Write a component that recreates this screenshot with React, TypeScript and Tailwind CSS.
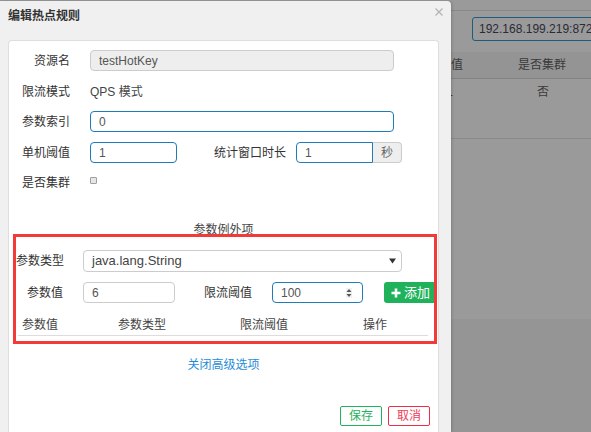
export default function App() {
  return (
    <div className="relative w-[591px] h-[432px] overflow-hidden bg-[#9a9a9a] font-['Liberation_Sans','Noto_Sans_CJK_SC',sans-serif] text-[12px] text-[#333]">
      {/* background page (dimmed) */}
      <div className="h-[11px] border-b border-[#888]" />
      <div className="pl-[472px] pt-[6px] flex">
        <div className="shrink-0 w-[170px] h-[24px] border border-[#1d5b80] rounded-[3px] flex items-center pl-[6px] text-[12px] text-[#2a2a38] whitespace-nowrap">
          192.168.199.219:8720
        </div>
      </div>
      <div className="mt-[11px] h-[27px] bg-[#949494] border-b border-[#828282] flex items-center text-[12px] text-[#3a3a3a] whitespace-nowrap">
        <div className="shrink-0 w-[463px] text-right">单机阈值</div>
        <div className="shrink-0 w-[158px] text-center">是否集群</div>
      </div>
      <div className="h-[60px] border-b border-[#8a8a8a] flex items-start pt-[5px] text-[12px] text-[#3a3a3a] leading-[17px] whitespace-nowrap">
        <div className="shrink-0 w-[453px] text-right">1</div>
        <div className="shrink-0 w-[180px] text-center">否</div>
      </div>
      <div className="h-[180px]" />
      <div className="h-[200px] bg-[#959595]" />

      {/* dialog */}
      <div className="absolute left-0 top-[1px] bottom-0 w-[451px] bg-[#f0f0f0] rounded-tr-[4px] shadow-[1px_0_3px_rgba(0,0,0,0.18)] flex flex-col">
        <div className="relative h-[39px] pt-[7px] px-[8px] leading-[17px] font-bold text-[12px] text-[#333]">
          编辑热点规则
          <svg className="absolute left-[435px] top-[7px]" width="8" height="8" viewBox="0 0 8 8">
            <path d="M0.5 0.5 L7.5 7.5 M7.5 0.5 L0.5 7.5" stroke="#b4b4b4" strokeWidth="1.3" />
          </svg>
        </div>

        <div className="ml-[8px] w-[431px] flex-1 bg-white border border-b-0 border-[#dedede] rounded-t-[4px] flex flex-col pt-[9px]">
          {/* 资源名 */}
          <div className="flex items-center h-[21px]">
            <div className="w-[61px] text-right whitespace-nowrap">资源名</div>
            <div className="ml-[20px] w-[304px] h-[21px] bg-[#eee] border border-[#ccc] rounded-[4px] pl-[8px] flex items-center text-[#555]">
              testHotKey
            </div>
          </div>
          {/* 限流模式 */}
          <div className="mt-[10px] flex items-center h-[21px]">
            <div className="w-[61px] text-right whitespace-nowrap">限流模式</div>
            <div className="ml-[20px] text-[#444]">QPS 模式</div>
          </div>
          {/* 参数索引 */}
          <div className="mt-[9px] flex items-center h-[21px]">
            <div className="w-[61px] text-right whitespace-nowrap">参数索引</div>
            <div className="ml-[20px] w-[304px] h-[21px] border border-[#1e7cb8] rounded-[4px] pl-[8px] flex items-center text-[#555]">
              0
            </div>
          </div>
          {/* 单机阈值 / 统计窗口时长 */}
          <div className="mt-[10px] flex items-center h-[21px]">
            <div className="w-[61px] text-right whitespace-nowrap">单机阈值</div>
            <div className="ml-[20px] w-[87px] h-[21px] border border-[#1e7cb8] rounded-[4px] pl-[8px] flex items-center text-[#555]">
              1
            </div>
            <div className="ml-[37px] whitespace-nowrap">统计窗口时长</div>
            <div className="ml-[10px] flex h-[21px]">
              <div className="w-[77px] h-[21px] border border-[#1e7cb8] rounded-l-[4px] pl-[8px] flex items-center text-[#555]">
                1
              </div>
              <div className="w-[29px] h-[21px] bg-[#eee] border border-l-0 border-[#ccc] rounded-r-[4px] flex items-center justify-center text-[#666]">
                秒
              </div>
            </div>
          </div>
          {/* 是否集群 */}
          <div className="mt-[10px] flex items-start h-[21px]">
            <div className="w-[61px] text-right whitespace-nowrap leading-[21px]">是否集群</div>
            <div className="ml-[20px] mt-[4px] w-[7px] h-[7px] border border-[#a0a0a0] rounded-[1px] bg-[#e6e6e6]" />
          </div>

          <div className="mt-[28px] h-[17px] leading-[17px] text-center text-[#444]">参数例外项</div>

          {/* red annotated box */}
          <div className="relative mt-[-5px] ml-[4px] w-[424px] border-[3px] border-[#f23a3a] pt-[13px] pb-[5px]">
            <div className="flex items-center h-[22px]">
              <div className="w-[47px] text-right whitespace-nowrap">参数类型</div>
              <div className="ml-[20px] w-[319px] h-[22px] border border-[#ccc] rounded-[4px] pl-[8px] pr-[5px] flex items-center text-[#444] text-[13px]">
                java.lang.String
                <svg className="ml-auto" width="7" height="6" viewBox="0 0 7 6">
                  <path d="M0 0.5 L7 0.5 L3.5 5.5 Z" fill="#333" />
                </svg>
              </div>
            </div>
            <div className="mt-[10px] flex items-center h-[21px]">
              <div className="w-[47px] text-right whitespace-nowrap">参数值</div>
              <div className="ml-[20px] w-[92px] h-[21px] border border-[#ccc] rounded-[4px] pl-[8px] flex items-center text-[#555]">
                6
              </div>
              <div className="ml-[29px] w-[47px] whitespace-nowrap">限流阈值</div>
              <div className="ml-[21px] w-[91px] h-[21px] border border-[#1e7cb8] rounded-[4px] pl-[8px] pr-[10px] flex items-center text-[#555]">
                100
                <svg className="ml-auto" width="6" height="10" viewBox="0 0 6 10">
                  <rect x="-2" y="-1" width="10" height="12" fill="#f2f2f2" />
                  <path d="M0.5 4 L3 1 L5.5 4 Z M0.5 6 L3 9 L5.5 6 Z" fill="#555" />
                </svg>
              </div>
              <div className="ml-[21px] w-[50px] h-[21px] bg-[#1fb25a] rounded-l-[3px] flex items-center pl-[7px] text-white text-[13px] whitespace-nowrap">
                <svg width="10" height="10" viewBox="0 0 10 10">
                  <path d="M5 0.5 V9.5 M0.5 5 H9.5" stroke="#fff" strokeWidth="2.6" />
                </svg>
                <span className="ml-[3px]">添加</span>
              </div>
            </div>
            <div className="mt-[11px] ml-[2px] w-[410px] h-[22px] border-b border-[#ddd] grid grid-cols-[96px_122px_123px_69px] items-center text-[#444]">
              <div className="pl-[4px] whitespace-nowrap">参数值</div>
              <div className="pl-[4px] whitespace-nowrap">参数类型</div>
              <div className="pl-[4px] whitespace-nowrap">限流阈值</div>
              <div className="pl-[4px] whitespace-nowrap">操作</div>
            </div>
          </div>

          <div className="mt-[13px] h-[17px] leading-[17px] text-center text-[#1f8dd6]">关闭高级选项</div>

          <div className="mt-[32px] flex justify-end pr-[8px] gap-[6px]">
            <div className="w-[42px] h-[20px] border border-[#1fb25a] rounded-[2px] flex items-center justify-center text-[#1fb25a]">
              保存
            </div>
            <div className="w-[42px] h-[20px] border border-[#ee2c44] rounded-[2px] flex items-center justify-center text-[#f03c58]">
              取消
            </div>
          </div>
        </div>
      </div>
    </div>
  );
}
